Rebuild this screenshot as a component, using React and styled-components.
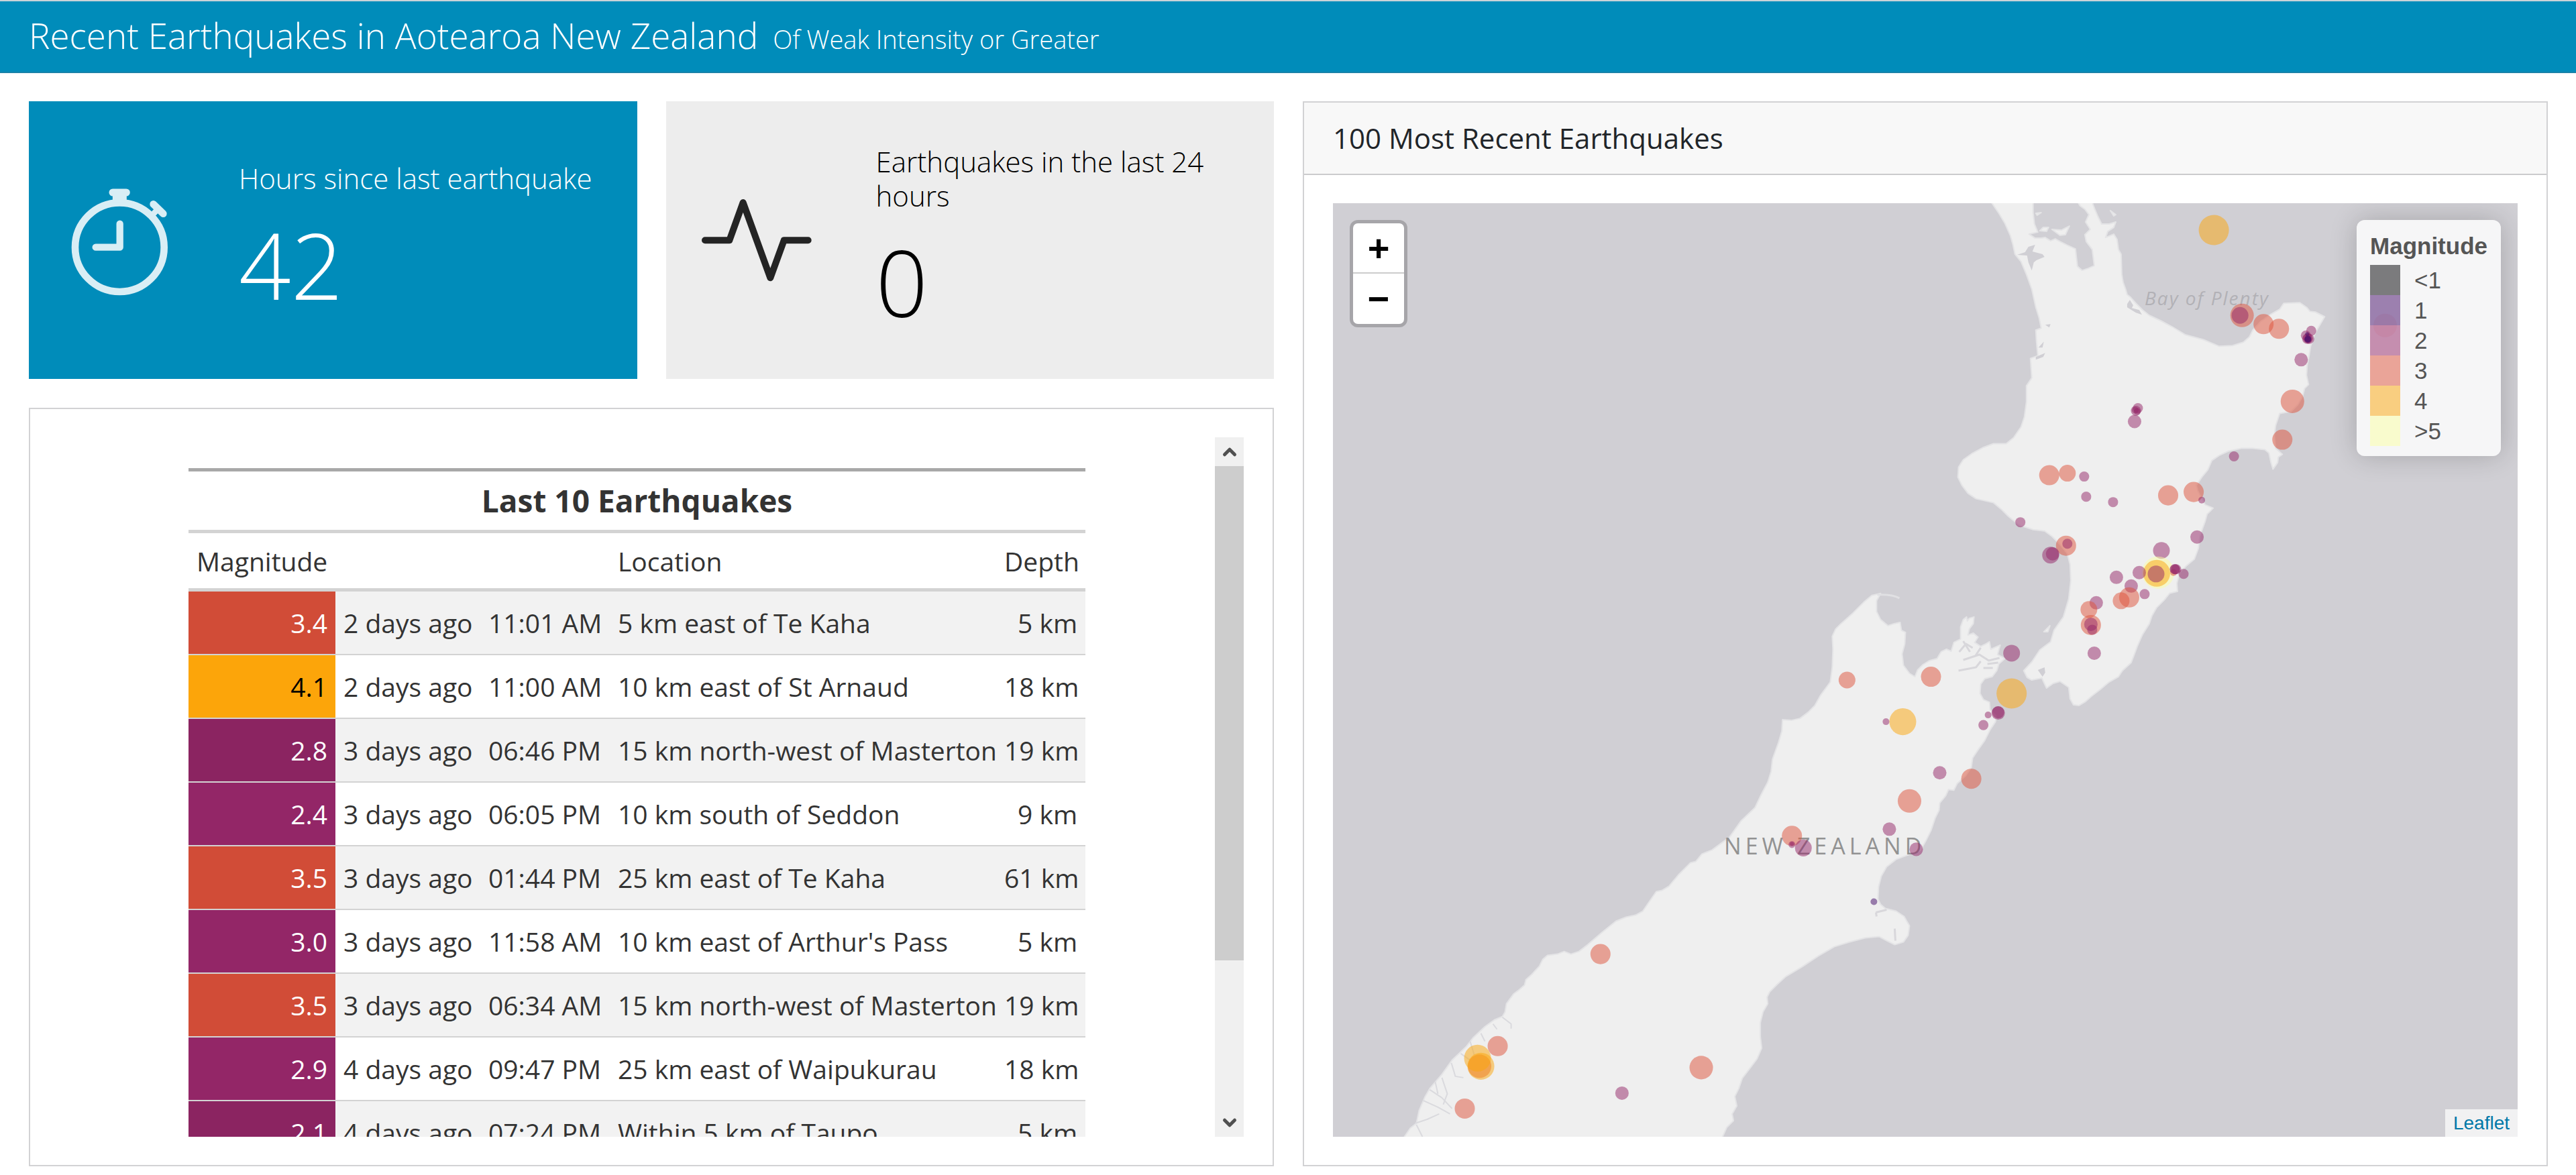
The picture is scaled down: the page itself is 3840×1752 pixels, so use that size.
import React, { useRef } from "react";
import styled, { createGlobalStyle } from "styled-components";
import { FiChevronUp, FiChevronDown } from "react-icons/fi";

const GlobalStyle = createGlobalStyle`
  * {
    box-sizing: border-box;
  }

  body {
    margin: 0;
    background: #fff;
    color: #212529;
    font-family: "Open Sans", "Noto Sans", sans-serif;
    font-size: 42px;
  }
`;

const Page = styled.div`
  display: flex;
  flex-direction: column;
  height: 100vh;
  min-height: 1200px;
`;

const Navbar = styled.header`
  display: flex;
  align-items: baseline;
  gap: 22px;
  height: 109px;
  padding: 18px 43px 0;
  background: #008cba;
  border-top: 2px solid #c9d3d8;
  border-bottom: 2px solid #1a82a8;
  color: #fff;
  font-weight: 300;

  h1 {
    margin: 0;
    font-size: 53px;
    line-height: 66px;
    font-weight: 300;
  }

  p {
    margin: 0;
    font-size: 38px;
    line-height: 52px;
  }
`;

const Dashboard = styled.main`
  flex: 1;
  min-height: 0;
  display: grid;
  grid-template-columns: minmax(0, 1fr) minmax(0, 1fr);
  gap: 43px;
  padding: 42px 42px 13px 43px;
`;

const Column = styled.div`
  display: flex;
  flex-direction: column;
  gap: 43px;
  min-height: 0;
`;

const BoxRow = styled.div`
  display: grid;
  grid-template-columns: 1fr 1fr;
  gap: 43px;
`;

const ValueBoxCard = styled.section`
  display: flex;
  align-items: center;
  min-height: 414px;
  background: ${(props) => (props.$primary ? "#008cba" : "#ededed")};
  color: ${(props) => (props.$primary ? "#fff" : "#000")};
`;

const Showcase = styled.div`
  flex: none;
  display: flex;
  justify-content: center;
  width: 270px;
  color: ${(props) => (props.$primary ? "#d9eef5" : "#242424")};
`;

const ValueBoxText = styled.div`
  flex: 1;
  padding: 43px 0 43px 43px;

  h2 {
    margin: 0;
    font-size: 42px;
    line-height: 51px;
    font-weight: 300;
  }

  p {
    margin: 22px 0 0;
    font-size: 136px;
    line-height: 163px;
    font-weight: 300;
  }
`;

const Card = styled.section`
  flex: 1;
  display: flex;
  flex-direction: column;
  min-height: 0;
  border: 2px solid #d2d2d4;
  background: #fff;
`;

const CardHeader = styled.h2`
  margin: 0;
  padding: 24px 43px;
  border-bottom: 2px solid #cbcbcd;
  background: #f8f8f8;
  color: #212529;
  font-size: 42px;
  line-height: 58px;
  font-weight: 400;
`;

const CardBody = styled.div`
  flex: 1;
  display: flex;
  min-height: 0;
  padding: 42px 43px;
`;

const TableScroll = styled.div`
  flex: 1;
  overflow-y: auto;
  padding: 46px 0;
  scrollbar-width: none;
`;

const QuakeTable = styled.table`
  width: 1337px;
  margin: 0 auto;
  table-layout: fixed;
  border-collapse: collapse;
  border-top: 5px solid #a8a8a8;
  color: #333;
  font-size: 39px;
  line-height: 55px;
  white-space: nowrap;

  th,
  td {
    padding: 19px 12px;
    border-bottom: 2px solid #d3d3d3;
    font-weight: 400;
    text-align: left;
  }

  thead th {
    height: 87px;
    padding: 13px 12px;
    border-bottom: 5px solid #d3d3d3;
  }

  thead tr:first-child th {
    height: 92px;
    font-size: 46px;
    font-weight: 700;
    text-align: center;
  }

  tbody tr {
    height: 95px;
  }

  tbody tr:nth-child(odd) {
    background: #f2f2f2;
  }

  th:last-child,
  td:last-child {
    text-align: right;
  }
`;

const MagCell = styled.td`
  && {
    background: ${(props) => props.$fill};
    color: ${(props) => props.$ink};
    text-align: right;
  }

  tr:nth-child(odd) > && {
    box-shadow: inset 0 0 0 100px rgba(0, 0, 0, 0.05);
  }
`;

const Scrollbar = styled.div`
  flex: none;
  display: flex;
  flex-direction: column;
  width: 43px;
  background: #f0f0f0;

  button {
    display: flex;
    align-items: center;
    justify-content: center;
    height: 43px;
    padding: 0;
    border: 0;
    background: none;
    color: #505050;
  }
`;

const Track = styled.div`
  flex: 1;
`;

const Thumb = styled.div`
  height: 77%;
  background: #cdcdcd;
`;

const MapFrame = styled.div`
  position: relative;
  flex: 1;
  overflow: hidden;
  background: #d0cfd4;
  font-family: "Liberation Sans", Arial, sans-serif;

  > svg {
    display: block;
    position: absolute;
    width: 100%;
    height: 100%;
  }
`;

const ZoomControl = styled.div`
  position: absolute;
  top: 25px;
  left: 25px;
  display: flex;
  flex-direction: column;
  width: 86px;
  border: 5px solid rgba(0, 0, 0, 0.2);
  border-radius: 12px;
  background: #fff;
  background-clip: padding-box;

  button {
    height: 75px;
    padding: 0;
    border: 0;
    background: none;
    color: #000;
    font: 700 56px/70px "Liberation Sans", Arial, sans-serif;
  }

  button:first-child {
    border-bottom: 2px solid #ccc;
  }
`;

const Legend = styled.div`
  position: absolute;
  top: 25px;
  right: 25px;
  padding: 16px 20px 15px;
  border-radius: 12px;
  background: rgba(255, 255, 255, 0.8);
  box-shadow: 0 0 40px rgba(0, 0, 0, 0.2);
  color: #555;
  font-size: 35px;
  line-height: 45px;

  h3 {
    margin: 0 0 6px;
    font-size: 35px;
    line-height: 45px;
  }

  ul {
    margin: 0;
    padding: 0;
    list-style: none;
  }

  li {
    display: flex;
    gap: 21px;
  }
`;

const Swatch = styled.span`
  width: 45px;
  height: 45px;
  background: ${(props) => props.$fill};
  opacity: 0.5;
`;

const Attribution = styled.div`
  position: absolute;
  right: 0;
  bottom: 0;
  padding: 0 12px;
  background: rgba(255, 255, 255, 0.7);
  font-size: 28px;
  line-height: 41px;

  a {
    color: #0078a8;
    text-decoration: none;
  }
`;

const colors = {
  0: "#000004",
  1: "#420a68",
  2: "#932667",
  3: "#dd513a",
  4: "#fca50a",
  5: "#fcffa4",
};

const legend = [
  ["<1", colors[0]],
  ["1", colors[1]],
  ["2", colors[2]],
  ["3", colors[3]],
  ["4", colors[4]],
  [">5", colors[5]],
];

const quakes = [
  ["3.4", "2 days ago", "11:01 AM", "5 km east of Te Kaha", "5 km"],
  ["4.1", "2 days ago", "11:00 AM", "10 km east of St Arnaud", "18 km"],
  ["2.8", "3 days ago", "06:46 PM", "15 km north-west of Masterton", "19 km"],
  ["2.4", "3 days ago", "06:05 PM", "10 km south of Seddon", "9 km"],
  ["3.5", "3 days ago", "01:44 PM", "25 km east of Te Kaha", "61 km"],
  ["3.0", "3 days ago", "11:58 AM", "10 km east of Arthur's Pass", "5 km"],
  ["3.5", "3 days ago", "06:34 AM", "15 km north-west of Masterton", "19 km"],
  ["2.9", "4 days ago", "09:47 PM", "25 km east of Waipukurau", "18 km"],
  ["2.1", "4 days ago", "07:24 PM", "Within 5 km of Taupo", "5 km"],
];

const cellFill = (mag) => {
  if (mag > 4) return colors[4];
  return mag > 3 ? colors[3] : colors[2];
};

// x, y, radius, colour band
const markers = [
  [3299, 344, 22.5, 4],
  [3341, 471, 17.5, 3],
  [3338, 471, 12.5, 2],
  [3373, 484, 15, 3],
  [3396, 491, 15, 3],
  [3444, 494, 7.5, 2],
  [3436, 501, 7.5, 2],
  [3441, 506, 7.5, 2],
  [3438, 506, 7.5, 2],
  [3439, 505, 7.5, 2],
  [3439, 507, 5, 1],
  [3438, 499, 3, 1],
  [3439, 506, 5, 1],
  [3429, 537, 10, 2],
  [3554, 486, 17.5, 3],
  [3416, 599, 17.5, 3],
  [3401, 656, 15, 3],
  [3329, 681, 7.5, 2],
  [3186, 609, 7.5, 2],
  [3183, 613, 7.5, 2],
  [3182, 612, 5, 2],
  [3185, 614, 5, 2],
  [3181, 629, 10, 2],
  [3054, 709, 15, 3],
  [3081, 706, 12.5, 3],
  [3106, 711, 7.5, 2],
  [3109, 741, 7.5, 2],
  [3149, 749, 7.5, 2],
  [3011, 779, 7.5, 2],
  [3231, 739, 15, 3],
  [3269, 734, 15, 3],
  [3281, 746, 5, 2],
  [3079, 814, 15, 3],
  [3081, 811, 7.5, 2],
  [3056, 828, 12.5, 2],
  [3059, 826, 10, 2],
  [3274, 801, 10, 2],
  [3221, 821, 12.5, 2],
  [3216, 854, 24, 5],
  [3214, 855, 20, 4],
  [3213, 856, 12.5, 2],
  [3188, 854, 10, 2],
  [3154, 861, 10, 2],
  [3176, 874, 10, 2],
  [3173, 891, 15, 3],
  [3161, 896, 12.5, 3],
  [3196, 886, 7.5, 2],
  [3239, 854, 5, 3],
  [3241, 849, 7.5, 2],
  [3243, 849, 7.5, 2],
  [3241, 849, 7.5, 2],
  [3254, 856, 7.5, 2],
  [3124, 899, 10, 2],
  [3113, 909, 12.5, 3],
  [3116, 932, 15, 3],
  [3116, 931, 10, 2],
  [3118, 939, 7.5, 2],
  [3121, 974, 10, 2],
  [2998, 974, 12.5, 2],
  [2998, 1034, 22.5, 4],
  [2978, 1063, 10, 2],
  [2978, 1062, 9, 2],
  [2963, 1066, 5, 2],
  [2956, 1081, 7.5, 2],
  [2878, 1009, 15, 3],
  [2753, 1014, 12.5, 3],
  [2836, 1076, 20, 4],
  [2811, 1076, 5, 2],
  [2891, 1152, 10, 2],
  [2938, 1161, 15, 3],
  [2846, 1194, 17.5, 3],
  [2816, 1236, 10, 2],
  [2856, 1266, 10, 2],
  [2671, 1246, 15, 3],
  [2671, 1259, 5, 2],
  [2671, 1258, 3, 2],
  [2688, 1264, 12.5, 2],
  [2793, 1344, 5, 1],
  [2386, 1422, 15, 3],
  [2233, 1559, 15, 3],
  [2206, 1589, 17.5, 3],
  [2203, 1577, 20, 4],
  [2208, 1589, 20, 4],
  [2536, 1591, 17.5, 3],
  [2418, 1629, 10, 2],
  [2184, 1652, 15, 3],
];

const northIsland =
  "M2966 300 L2979 319 2988 334 2996 352 3000 366 3003 380 3012 391 3020 410 3028 432 3034 459 3039 475 3042 490 3034 493 3035 510 3037 531 3026 535 3028 564 3020 576 3020 600 3017 622 3012 637 3001 653 2990 662 2971 662 2955 668 2940 676 2926 686 2919 697 2918 712 2924 724 2933 736 2945 744 2971 750 2983 760 2993 770 3009 783 3030 790 3047 792 3058 800 3070 812 3081 826 3085 842 3086 866 3083 893 3075 920 3061 940 3056 957 3040 969 3028 987 3016 1000 3021 1010 3028 1014 3043 1011 3050 1026 3060 1019 3070 1016 3083 1025 3085 1042 3090 1051 3098 1052 3108 1046 3117 1038 3130 1028 3143 1017 3157 1009 3163 1000 3176 988 3181 975 3185 964 3193 946 3203 930 3207 918 3214 906 3225 895 3233 885 3245 882 3244 870 3248 854 3258 844 3270 834 3276 818 3278 800 3286 778 3289 767 3298 758 3286 753 3275 732 3273 724 3281 712 3290 701 3296 687 3308 679 3321 673 3340 669 3357 669 3375 671 3381 676 3384 690 3387 700 3394 690 3395 682 3401 678 3391 669 3389 650 3391 635 3397 617 3414 614 3424 604 3431 592 3434 580 3440 574 3437 560 3438 545 3441 530 3443 517 3450 497 3464 473 3450 466 3442 465 3437 459 3427 452 3403 453 3397 462 3383 470 3369 480 3357 493 3352 503 3343 511 3327 516 3307 517 3283 507 3257 500 3237 488 3220 479 3203 471 3193 463 3183 453 3174 443 3170 440 3168 433 3164 422 3162 410 3161 380 3157 373 3155 358 3150 350 3138 355 3141 346 3150 340 3153 332 3143 335 3132 335 3127 325 3124 318 3121 311 3117 300 H3095 L3100 308 3107 313 3113 321 3108 332 3115 343 3107 351 3109 361 3118 373 3121 397 3112 401 3103 404 3096 398 3093 372 3080 366 3070 361 3063 357 3056 360 3048 355 3042 356 3033 356 3024 350 3037 347 3032 335 3030 318 3030 300 Z";

const southIsland =
  "M2090 1700 L2103 1681 2112 1674 2116 1655 2125 1634 2132 1622 2150 1601 2165 1580 2186 1560 2196 1547 2214 1530 2228 1520 2240 1515 2244 1508 2246 1496 2257 1481 2264 1476 2273 1468 2275 1460 2284 1452 2295 1440 2300 1430 2307 1424 2322 1422 2332 1418 2342 1422 2354 1418 2367 1408 2388 1390 2409 1373 2424 1367 2438 1364 2449 1358 2460 1342 2469 1329 2478 1327 2488 1321 2503 1303 2520 1286 2528 1284 2537 1273 2552 1267 2578 1248 2595 1224 2616 1204 2625 1185 2635 1166 2640 1150 2642 1132 2651 1107 2656 1090 2657 1073 2670 1074 2683 1071 2695 1062 2705 1052 2714 1036 2728 1017 2731 995 2732 968 2731 949 2736 938 2744 930 2762 914 2778 898 2790 888 2803 885 2797 896 2797 912 2803 924 2814 933 2823 930 2832 928 2834 940 2840 943 2839 960 2835 975 2837 992 2846 1004 2854 1009 2858 999 2866 991 2876 985 2887 982 2893 972 2901 968 2908 971 2912 958 2922 953 2922 935 2926 924 2931 920 2932 926 2935 922 2942 920 2941 930 2935 938 2933 947 2941 944 2948 950 2943 958 2952 964 2960 960 2965 957 2967 968 2981 962 2977 976 2988 982 2979 990 2976 1000 2969 1009 2958 1012 2952 1020 2951 1034 2956 1043 2965 1047 2966 1058 2975 1067 2974 1076 2966 1088 2958 1104 2948 1118 2940 1130 2938 1144 2930 1156 2917 1168 2912 1178 2904 1177 2900 1186 2891 1197 2890 1208 2884 1220 2878 1238 2870 1254 2862 1268 2845 1274 2826 1281 2812 1292 2804 1306 2800 1322 2799 1340 2803 1348 2810 1354 2826 1358 2838 1366 2846 1380 2844 1394 2837 1404 2824 1408 2812 1402 2801 1396 2780 1398 2757 1404 2734 1411 2710 1425 2686 1441 2661 1456 2648 1468 2638 1478 2634 1486 2635 1496 2628 1508 2624 1524 2624 1545 2626 1562 2619 1578 2610 1590 2597 1607 2592 1622 2586 1634 2589 1648 2582 1660 2584 1670 2574 1680 2565 1700 Z";

// harbours and lagoons that cut into the land
const inlets =
  "M3006 381 L3018 377 3023 369 3033 366 3029 376 3044 380 3047 384 3035 389 3031 392 3028 404 3023 392 3021 382Z M3170 454 L3174 448 3179 456 3177 460 3188 463 3192 470 3183 467 3170 459Z M3034 533 L3048 527 3045 533 3034 537Z M3038 519 L3046 510 3044 519Z M3048 485 L3056 484 3054 489Z M3037 999 L3047 995 3048 1003 3044 1009Z";

const islands =
  "M3040 345 L3045 340 3053 340 3050 346Z M3058 343 L3072 344 3084 338 3078 351 3070 352Z M3046 942 L3055 933 3052 942Z M3145 315 L3153 321 3150 323Z M3034 319 L3042 318 3036 322Z";

const fiords =
  "M2122 1640 L2144 1650 2162 1660 M2132 1624 L2150 1636 2165 1652 M2150 1606 L2158 1630 2152 1646 M2164 1584 L2170 1604 2182 1606 M2178 1570 L2192 1580 M2192 1552 L2198 1572 M2208 1540 L2214 1552 M2226 1526 L2232 1534 M2240 1516 L2253 1526 2253 1533 M2110 1674 L2128 1668 2146 1660 M2112 1676 L2121 1694 M2140 1612 L2144 1630";

const sounds =
  "M2920 972 L2930 960 2940 966 M2926 984 L2950 976 2964 985 2980 981 M2919 1000 L2945 995 2952 986 M2952 966 L2944 978 M2962 990 L2978 988 M2926 956 L2936 972 M2956 996 L2970 996 M2796 1360 L2812 1356 M2796 1360 L2797 1366 M2824 1384 L2825 1402";

function StopwatchIcon() {
  return (
    <svg width="172" height="172" viewBox="97 96 516 516" fill="none" stroke="currentColor" aria-hidden="true">
      <circle cx="356" cy="386" r="199" strokeWidth="32" />
      <path d="M357 281 V386 H249" strokeWidth="31" strokeLinecap="round" strokeLinejoin="round" />
      <path d="M325 141 H386" strokeWidth="33" strokeLinecap="round" />
      <path d="M356 150 V184" strokeWidth="63" />
      <path d="M507 193 L551 236" strokeWidth="32" strokeLinecap="round" />
      <path d="M529 214 L500 244" strokeWidth="26" />
    </svg>
  );
}

function PulseIcon() {
  return (
    <svg width="172" height="172" viewBox="66 36 516 516" fill="none" stroke="currentColor" aria-hidden="true">
      <path
        d="M93 295 H202 L263 126 L385 463 L446 295 H554"
        strokeWidth="30"
        strokeLinecap="round"
        strokeLinejoin="round"
      />
    </svg>
  );
}

function ValueBox({ title, value, icon, primary }) {
  return (
    <ValueBoxCard $primary={primary}>
      <Showcase $primary={primary}>{icon}</Showcase>
      <ValueBoxText>
        <h2>{title}</h2>
        <p>{value}</p>
      </ValueBoxText>
    </ValueBoxCard>
  );
}

function EarthquakeTable() {
  const scroller = useRef(null);
  const scroll = (top) => scroller.current.scrollBy({ top });

  return (
    <Card>
      <CardBody>
        <TableScroll ref={scroller}>
          <QuakeTable>
            <colgroup>
              <col style={{ width: 219 }} />
              <col style={{ width: 216 }} />
              <col style={{ width: 193 }} />
              <col />
              <col style={{ width: 133 }} />
            </colgroup>
            <thead>
              <tr>
                <th colSpan="5">Last 10 Earthquakes</th>
              </tr>
              <tr>
                <th>Magnitude</th>
                <th></th>
                <th></th>
                <th>Location</th>
                <th>Depth</th>
              </tr>
            </thead>
            <tbody>
              {quakes.map(([mag, day, time, place, depth]) => (
                <tr key={day + time}>
                  <MagCell $fill={cellFill(Number(mag))} $ink={mag > 4 ? "#000" : "#fff"}>
                    {mag}
                  </MagCell>
                  <td>{day}</td>
                  <td>{time}</td>
                  <td>{place}</td>
                  <td>{depth}</td>
                </tr>
              ))}
            </tbody>
          </QuakeTable>
        </TableScroll>
        <Scrollbar>
          <button type="button" aria-label="Scroll up" onClick={() => scroll(-95)}>
            <FiChevronUp size={30} strokeWidth={4} />
          </button>
          <Track>
            <Thumb />
          </Track>
          <button type="button" aria-label="Scroll down" onClick={() => scroll(95)}>
            <FiChevronDown size={30} strokeWidth={4} />
          </button>
        </Scrollbar>
      </CardBody>
    </Card>
  );
}

const PlaceName = styled.text`
  font-family: "Open Sans", "Noto Sans", sans-serif;
  font-size: ${(props) => (props.$country ? "34px" : "28px")};
  font-style: ${(props) => (props.$country ? "normal" : "italic")};
  letter-spacing: ${(props) => (props.$country ? "6px" : "2px")};
  fill: ${(props) => (props.$country ? "#929292" : "#b2b1b6")};
`;

function QuakeMap() {
  return (
    <Card>
      <CardHeader>100 Most Recent Earthquakes</CardHeader>
      <CardBody>
        <MapFrame>
          <svg viewBox="1986 304 1767 1390" preserveAspectRatio="xMidYMid slice">
            <g fill="#efefef" stroke="#e4e4e6" strokeWidth="2" strokeLinejoin="round">
              <path d={northIsland} />
              <path d={southIsland} />
              <path d={islands} />
            </g>
            <path d={inlets} fill="#d0cfd4" />
            <g fill="none" strokeLinejoin="round">
              <path d="M2798 887 Q2820 886 2831 892" stroke="#e0e0e3" strokeWidth="3" />
              <path d={fiords} stroke="#dadade" strokeWidth="2" />
              <path d={sounds} stroke="#d8d7db" strokeWidth="3" />
            </g>
            <PlaceName x="3196" y="456">
              Bay of Plenty
            </PlaceName>
            <PlaceName x="2570" y="1274" $country>
              NEW ZEALAND
            </PlaceName>
            <g fillOpacity="0.5">
              {markers.map(([x, y, r, band], i) => (
                <circle key={i} cx={x} cy={y} r={r} fill={colors[band]} />
              ))}
            </g>
          </svg>
          <ZoomControl>
            <button type="button" aria-label="Zoom in">
              +
            </button>
            <button type="button" aria-label="Zoom out">
              −
            </button>
          </ZoomControl>
          <Legend>
            <h3>Magnitude</h3>
            <ul>
              {legend.map(([label, fill]) => (
                <li key={label}>
                  <Swatch $fill={fill} />
                  {label}
                </li>
              ))}
            </ul>
          </Legend>
          <Attribution>
            <a href="https://leafletjs.com">Leaflet</a>
          </Attribution>
        </MapFrame>
      </CardBody>
    </Card>
  );
}

export default function App() {
  return (
    <>
      <GlobalStyle />
      <Page>
        <Navbar>
          <h1>Recent Earthquakes in Aotearoa New Zealand</h1>
          <p>Of Weak Intensity or Greater</p>
        </Navbar>
        <Dashboard>
          <Column>
            <BoxRow>
              <ValueBox primary title="Hours since last earthquake" value="42" icon={<StopwatchIcon />} />
              <ValueBox title="Earthquakes in the last 24 hours" value="0" icon={<PulseIcon />} />
            </BoxRow>
            <EarthquakeTable />
          </Column>
          <Column>
            <QuakeMap />
          </Column>
        </Dashboard>
      </Page>
    </>
  );
}
